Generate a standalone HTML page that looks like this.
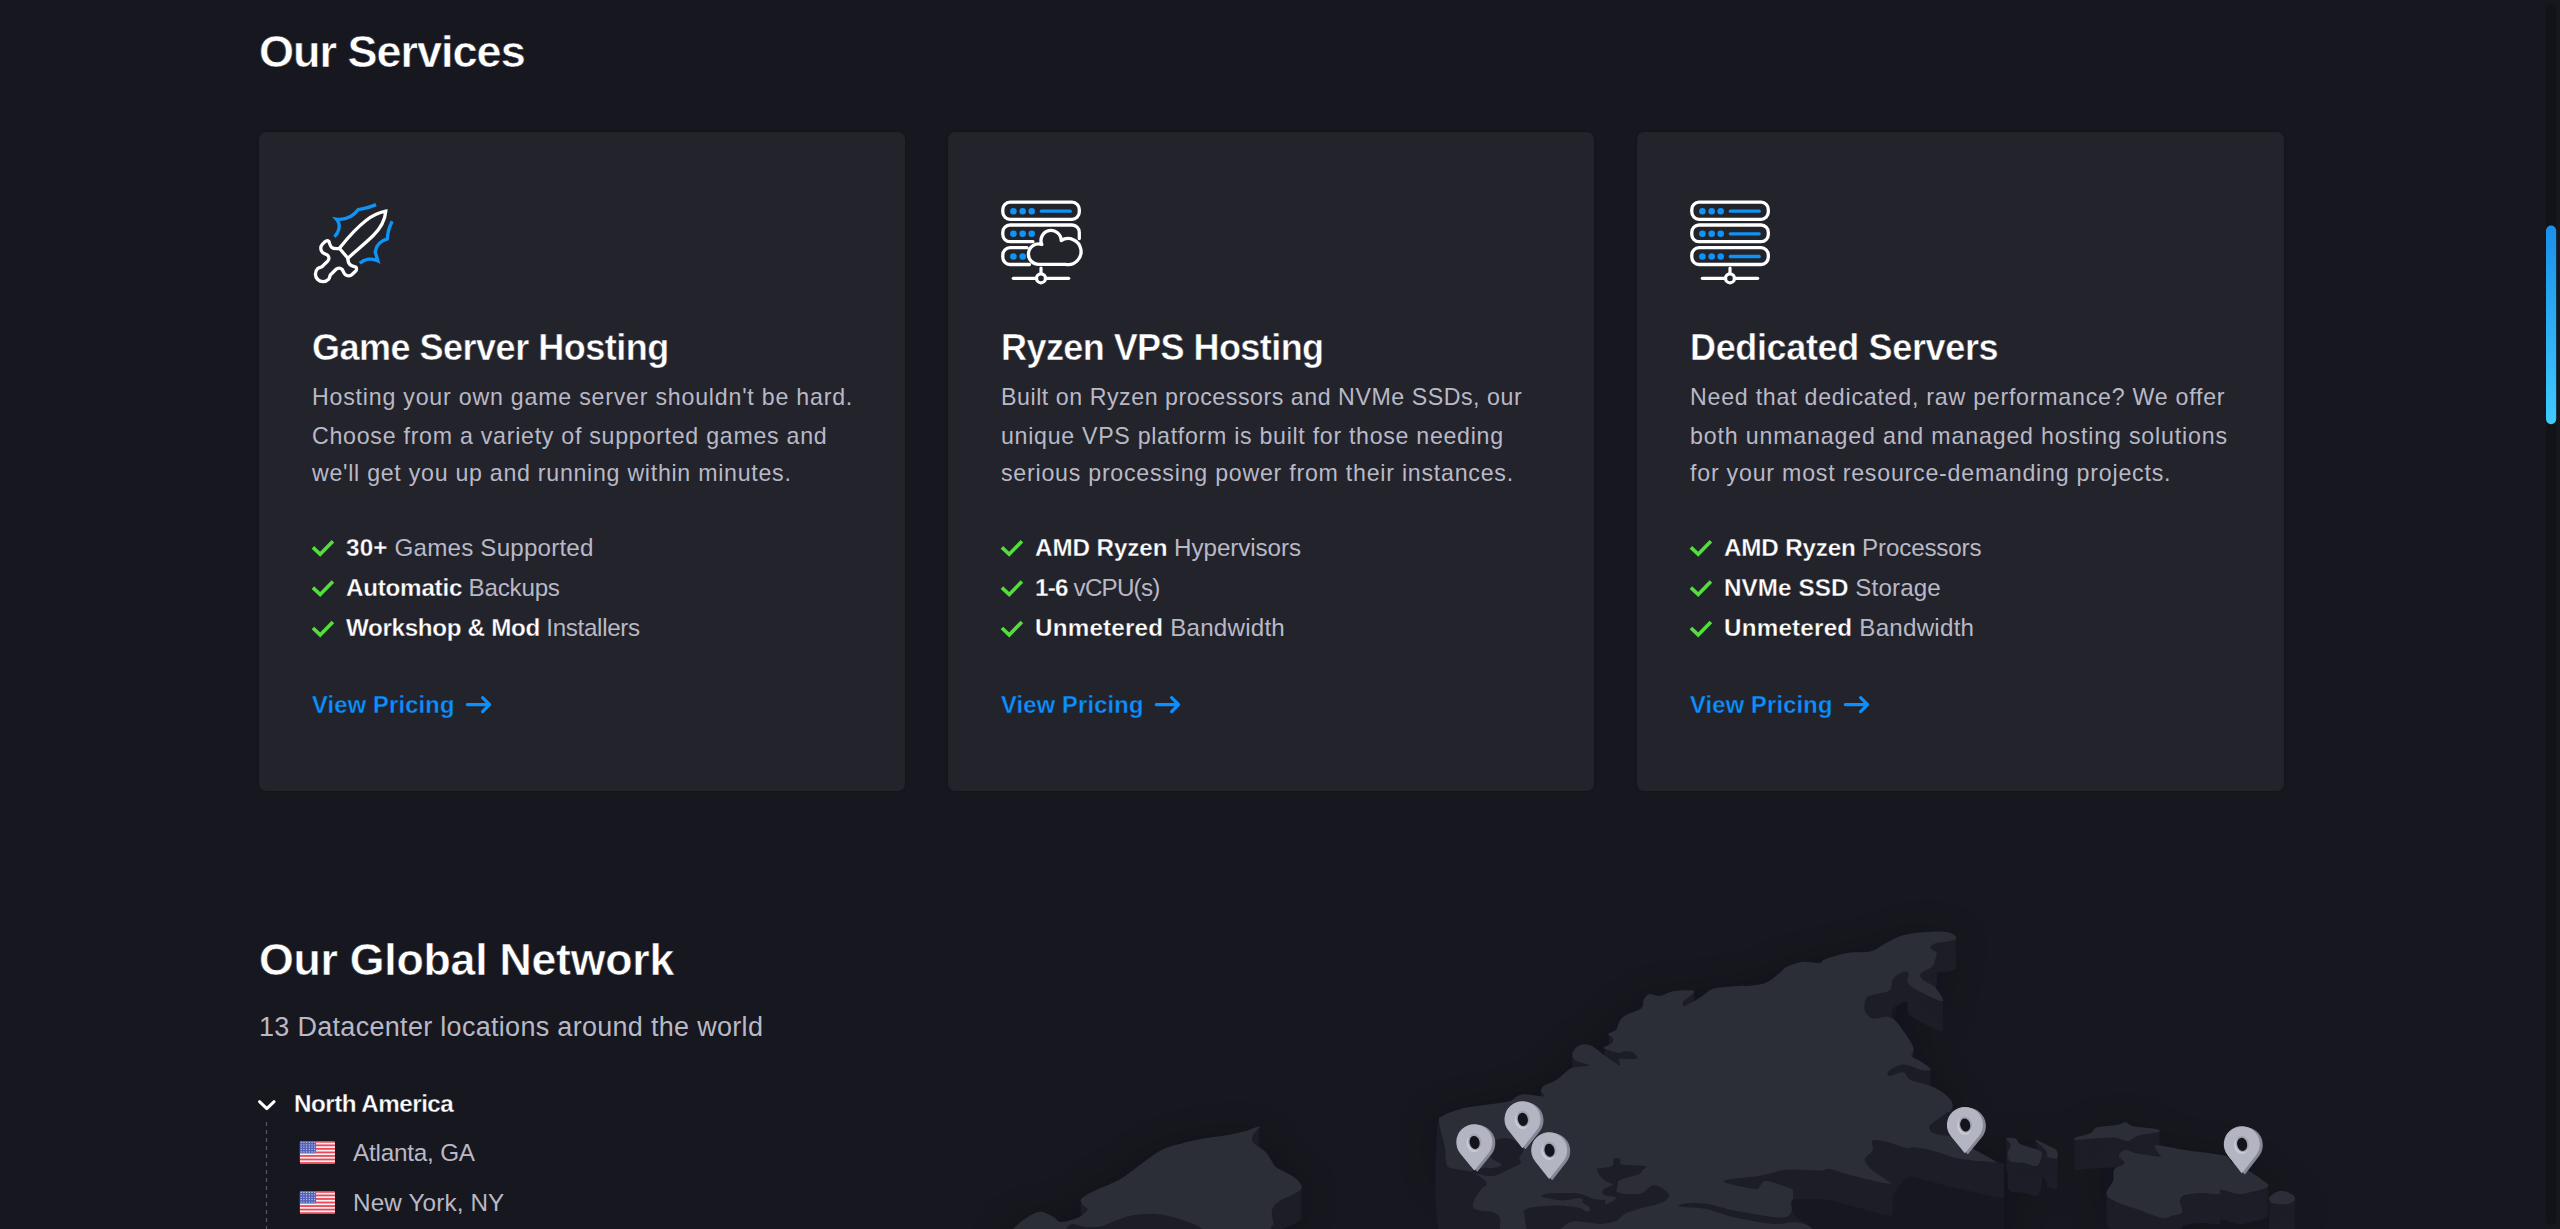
<!DOCTYPE html>
<html><head><meta charset="utf-8">
<style>
*{margin:0;padding:0;box-sizing:border-box}
html,body{width:2560px;height:1229px;overflow:hidden;background:#17171f;font-family:"Liberation Sans",sans-serif}
.a{position:absolute;white-space:nowrap;line-height:1}
.a b{color:#fff;font-weight:bold;-webkit-text-stroke:0.3px #23232c}
.card{position:absolute;top:132px;height:659px;background:#23232c;border-radius:7px;box-shadow:0 0 3px rgba(8,8,12,.3)}
svg{position:absolute;left:0;top:0}
</style></head>
<body>
<svg width="2560" height="1229" viewBox="0 0 2560 1229" style="position:absolute;left:0;top:0">
<defs>
<path id="f0" d="M1259.4,1126.6 C1257.9,1126.1 1249.5,1130.1 1243.8,1131.6 C1238.1,1133.1 1231.8,1134.3 1225.0,1135.5 C1218.2,1136.7 1210.6,1137.2 1203.1,1138.6 C1195.5,1140.0 1186.7,1142.0 1179.7,1144.0 C1172.7,1146.0 1167.4,1146.9 1160.9,1150.3 C1154.4,1153.7 1147.6,1159.5 1140.6,1164.4 C1133.6,1169.4 1126.6,1175.6 1118.8,1180.0 C1111.0,1184.4 1100.0,1187.8 1093.8,1190.9 C1087.5,1194.0 1083.1,1196.5 1081.3,1198.8 C1079.5,1201.1 1081.8,1203.2 1082.8,1205.0 C1083.8,1206.8 1088.2,1207.7 1087.5,1209.7 C1086.8,1211.7 1083.1,1215.2 1078.8,1217.2 C1074.5,1219.2 1065.8,1221.9 1061.6,1221.9 C1057.4,1221.9 1057.2,1218.9 1053.8,1217.2 C1050.4,1215.5 1045.2,1212.0 1041.3,1211.7 C1037.4,1211.4 1035.0,1212.7 1030.3,1215.6 C1025.6,1218.5 1017.2,1224.1 1013.0,1229.0 C1008.8,1233.9 1005.0,1245.0 1005.0,1245.0 C1005.0,1245.0 1290.0,1245.0 1290.0,1245.0 C1290.0,1245.0 1274.7,1232.5 1271.9,1229.0 C1269.1,1225.5 1273.4,1226.8 1273.4,1223.8 C1273.4,1220.8 1271.1,1214.9 1271.9,1211.3 C1272.7,1207.7 1273.9,1205.0 1278.1,1201.9 C1282.3,1198.8 1293.0,1195.1 1296.9,1192.5 C1300.8,1189.9 1302.1,1188.9 1301.6,1186.3 C1301.1,1183.7 1298.0,1180.0 1293.8,1176.9 C1289.6,1173.8 1280.2,1170.1 1276.6,1167.5 C1272.9,1164.9 1273.7,1163.9 1271.9,1161.3 C1270.1,1158.7 1268.7,1155.0 1265.6,1151.9 C1262.5,1148.8 1255.2,1145.4 1253.1,1142.5 C1251.0,1139.6 1252.0,1137.4 1253.1,1134.7 C1254.1,1132.0 1261.0,1127.1 1259.4,1126.6 Z"/>
<path id="f1" d="M1439.0,1122.8 C1438.6,1117.7 1438.2,1118.5 1442.4,1116.0 C1446.6,1113.5 1456.6,1110.0 1464.0,1108.1 C1471.4,1106.2 1479.1,1105.8 1486.6,1104.7 C1494.1,1103.6 1503.3,1103.0 1509.2,1101.3 C1515.1,1099.6 1516.0,1095.2 1521.7,1094.4 C1527.5,1093.6 1540.5,1096.9 1543.7,1096.4 C1546.9,1095.9 1541.0,1093.3 1541.0,1091.6 C1541.0,1089.9 1541.0,1088.2 1543.7,1086.1 C1546.5,1084.0 1552.9,1082.2 1557.5,1079.2 C1562.1,1076.2 1565.9,1070.5 1571.2,1068.2 C1576.5,1065.9 1588.4,1066.8 1589.1,1065.5 C1589.8,1064.2 1578.4,1062.7 1575.6,1060.6 C1572.8,1058.5 1571.7,1055.4 1572.5,1052.8 C1573.3,1050.2 1577.2,1046.2 1580.3,1045.0 C1583.4,1043.8 1587.1,1044.0 1591.3,1045.8 C1595.5,1047.6 1600.6,1052.8 1605.3,1056.0 C1610.0,1059.2 1617.1,1064.8 1619.4,1065.3 C1621.8,1065.8 1617.8,1060.0 1619.4,1059.0 C1621.0,1058.0 1625.8,1059.1 1628.8,1059.0 C1631.8,1058.9 1636.5,1059.3 1637.3,1058.3 C1638.1,1057.3 1635.4,1054.0 1633.4,1052.8 C1631.5,1051.6 1628.2,1051.3 1625.6,1051.3 C1623.0,1051.3 1621.4,1053.3 1617.8,1052.8 C1614.2,1052.3 1604.8,1049.7 1603.8,1048.1 C1602.8,1046.5 1610.0,1045.0 1611.6,1043.4 C1613.1,1041.9 1613.6,1040.4 1613.1,1038.8 C1612.6,1037.2 1607.9,1035.6 1608.4,1034.0 C1608.9,1032.4 1614.5,1031.5 1616.3,1029.4 C1618.1,1027.3 1617.9,1024.0 1619.4,1021.6 C1621.0,1019.2 1621.9,1017.5 1625.6,1015.3 C1629.2,1013.1 1638.3,1010.9 1641.3,1008.3 C1644.3,1005.7 1642.3,1002.1 1643.6,999.7 C1644.9,997.4 1646.3,994.9 1649.0,994.2 C1651.7,993.6 1655.8,996.3 1660.0,995.8 C1664.2,995.3 1668.8,992.0 1674.0,991.1 C1679.2,990.2 1688.0,990.0 1691.3,990.3 C1694.6,990.6 1694.9,990.9 1693.6,992.7 C1692.3,994.5 1685.1,999.1 1683.4,1001.3 C1681.7,1003.5 1682.6,1005.5 1683.4,1006.0 C1684.2,1006.5 1685.1,1005.9 1688.0,1004.4 C1690.9,1002.9 1696.4,999.9 1700.6,997.3 C1704.8,994.7 1707.8,990.6 1713.0,988.8 C1718.2,987.0 1725.4,986.9 1731.9,986.4 C1738.4,985.9 1746.2,986.4 1752.2,985.6 C1758.2,984.8 1763.1,983.9 1767.8,981.7 C1772.5,979.5 1777.2,974.8 1780.3,972.3 C1783.4,969.8 1782.9,968.6 1786.6,966.9 C1790.2,965.2 1796.7,962.5 1802.2,961.9 C1807.7,961.2 1815.5,963.5 1819.4,963.0 C1823.3,962.5 1820.7,960.7 1825.6,959.0 C1830.5,957.3 1841.5,954.1 1849.0,952.8 C1856.5,951.5 1864.4,953.1 1870.9,951.3 C1877.4,949.5 1881.8,944.8 1888.0,941.9 C1894.2,939.0 1899.0,935.7 1908.4,934.0 C1917.8,932.3 1936.5,931.2 1944.4,931.7 C1952.4,932.2 1955.1,935.6 1956.1,937.2 C1957.1,938.8 1954.1,940.1 1950.6,941.1 C1947.1,942.1 1938.4,942.2 1935.0,943.4 C1931.6,944.6 1930.0,946.5 1930.3,948.1 C1930.6,949.7 1935.8,950.7 1936.6,952.8 C1937.4,954.9 1935.8,958.2 1935.0,960.6 C1934.2,963.0 1934.2,964.8 1931.9,966.9 C1929.6,969.0 1922.6,971.0 1921.0,973.1 C1919.4,975.2 1920.2,977.0 1922.5,979.4 C1924.8,981.8 1931.8,983.6 1935.0,987.2 C1938.2,990.9 1946.2,1001.6 1942.0,1001.3 C1937.8,1001.0 1915.6,990.3 1910.0,985.6 C1904.4,980.9 1909.7,975.3 1908.4,973.1 C1907.1,970.9 1904.8,971.2 1902.2,972.3 C1899.6,973.3 1894.9,976.4 1892.8,979.4 C1890.7,982.4 1893.1,987.7 1889.7,990.3 C1886.3,992.9 1876.4,993.7 1872.5,995.0 C1868.6,996.3 1867.6,995.5 1866.3,998.1 C1865.0,1000.7 1863.7,1007.2 1864.7,1010.6 C1865.7,1014.0 1868.6,1017.4 1872.5,1018.4 C1876.4,1019.4 1883.8,1016.1 1888.0,1016.9 C1892.2,1017.7 1893.3,1018.2 1897.5,1023.1 C1901.7,1028.0 1910.7,1041.1 1913.0,1046.6 C1915.3,1052.1 1910.5,1053.6 1911.6,1055.9 C1912.7,1058.2 1916.2,1058.4 1919.4,1060.6 C1922.6,1062.8 1930.4,1067.6 1930.7,1069.2 C1931.0,1070.8 1926.1,1070.8 1921.5,1070.0 C1916.9,1069.2 1908.5,1064.5 1903.1,1064.6 C1897.7,1064.7 1891.5,1068.8 1889.2,1070.7 C1886.9,1072.6 1886.9,1075.8 1889.2,1076.1 C1891.5,1076.4 1899.5,1071.6 1903.1,1072.3 C1906.7,1073.0 1906.1,1077.7 1910.7,1080.0 C1915.3,1082.3 1925.1,1083.8 1930.7,1086.1 C1936.3,1088.4 1941.0,1091.0 1944.6,1093.8 C1948.2,1096.6 1951.3,1100.2 1952.3,1103.0 C1953.3,1105.8 1952.5,1107.9 1950.7,1110.7 C1948.9,1113.5 1944.8,1117.3 1941.5,1119.9 C1938.2,1122.5 1932.2,1124.0 1930.7,1126.1 C1929.2,1128.1 1929.5,1130.7 1932.3,1132.2 C1935.1,1133.7 1942.0,1133.2 1947.6,1135.3 C1953.2,1137.4 1959.8,1141.7 1966.0,1145.0 C1972.2,1148.3 1979.5,1152.2 1984.5,1155.0 C1989.5,1157.8 1993.8,1159.8 1996.0,1162.0 C1998.2,1164.2 1997.7,1154.2 1998.0,1168.0 C1998.3,1181.8 1998.0,1245.0 1998.0,1245.0 C1998.0,1245.0 1497.9,1245.0 1497.9,1245.0 C1497.9,1245.0 1500.9,1225.6 1500.1,1220.1 C1499.3,1214.6 1496.3,1213.7 1493.3,1212.2 C1490.3,1210.7 1485.4,1211.8 1482.0,1211.0 C1478.6,1210.2 1474.1,1209.7 1473.0,1207.6 C1471.9,1205.5 1473.9,1201.6 1475.2,1198.6 C1476.5,1195.6 1479.0,1192.1 1480.9,1189.5 C1482.8,1186.9 1487.9,1185.6 1486.6,1182.8 C1485.3,1180.0 1477.9,1174.9 1473.0,1172.6 C1468.1,1170.3 1461.2,1170.2 1457.1,1169.2 C1452.9,1168.2 1450.0,1168.4 1448.1,1166.9 C1446.2,1165.4 1446.4,1163.5 1445.8,1160.1 C1445.2,1156.7 1445.8,1152.8 1444.7,1146.6 C1443.6,1140.4 1439.4,1127.9 1439.0,1122.8 Z"/>
<path id="f2" d="M2006.0,1138.4 C2006.8,1137.4 2012.7,1137.4 2015.3,1138.4 C2017.9,1139.4 2017.3,1142.5 2021.4,1144.5 C2025.5,1146.5 2036.6,1148.7 2039.9,1150.7 C2043.2,1152.8 2041.9,1154.2 2041.4,1156.8 C2040.9,1159.4 2039.6,1165.1 2036.8,1166.1 C2034.0,1167.1 2028.8,1163.8 2024.5,1163.0 C2020.2,1162.2 2013.5,1162.9 2010.7,1161.4 C2007.9,1159.9 2007.6,1156.6 2007.6,1153.8 C2007.6,1151.0 2011.0,1147.1 2010.7,1144.5 C2010.4,1141.9 2005.2,1139.4 2006.0,1138.4 Z"/>
<path id="f3" d="M2035.3,1139.9 C2035.8,1139.1 2045.5,1144.3 2049.1,1146.1 C2052.7,1147.9 2055.5,1148.7 2056.8,1150.7 C2058.1,1152.8 2058.3,1157.4 2056.8,1158.4 C2055.3,1159.4 2049.4,1158.1 2047.6,1156.8 C2045.8,1155.5 2048.1,1153.5 2046.0,1150.7 C2044.0,1147.9 2034.8,1140.7 2035.3,1139.9 Z"/>
<path id="f4" d="M2075.8,1137.5 C2078.2,1136.4 2086.9,1134.7 2090.5,1133.0 C2094.1,1131.3 2093.0,1128.6 2097.3,1127.3 C2101.7,1126.0 2111.9,1125.9 2116.6,1125.1 C2121.3,1124.2 2122.8,1122.0 2125.6,1122.2 C2128.4,1122.4 2128.4,1125.1 2133.5,1126.2 C2138.6,1127.3 2152.0,1128.0 2156.2,1129.0 C2160.3,1130.0 2161.2,1130.9 2158.4,1131.9 C2155.6,1132.9 2144.3,1133.7 2139.2,1135.2 C2134.1,1136.7 2132.1,1140.5 2127.9,1140.9 C2123.8,1141.3 2120.0,1137.9 2114.3,1137.5 C2108.7,1137.1 2100.4,1138.2 2094.0,1138.6 C2087.6,1139.0 2078.8,1140.0 2075.8,1139.8 C2072.8,1139.6 2073.4,1138.6 2075.8,1137.5 Z"/>
<path id="f5" d="M2155.0,1145.4 C2157.3,1144.3 2168.2,1146.9 2173.1,1147.7 C2178.0,1148.5 2175.9,1148.7 2184.4,1150.0 C2192.9,1151.3 2216.1,1153.5 2224.0,1155.6 C2231.9,1157.7 2228.2,1160.1 2232.0,1162.4 C2235.8,1164.7 2241.0,1165.8 2246.7,1169.2 C2252.3,1172.6 2262.5,1179.8 2265.9,1182.8 C2269.3,1185.8 2269.3,1185.8 2267.0,1187.3 C2264.7,1188.8 2257.0,1190.7 2252.3,1191.8 C2247.6,1192.9 2244.0,1194.5 2238.7,1194.1 C2233.4,1193.7 2223.8,1189.5 2220.6,1189.5 C2217.4,1189.5 2222.7,1193.5 2219.5,1194.1 C2216.3,1194.7 2207.2,1192.7 2201.4,1192.9 C2195.6,1193.1 2188.0,1193.9 2184.4,1195.2 C2180.8,1196.5 2180.3,1198.1 2179.9,1200.9 C2179.5,1203.7 2183.3,1209.8 2182.2,1212.2 C2181.1,1214.7 2176.5,1214.7 2173.1,1215.6 C2169.7,1216.5 2167.5,1218.8 2161.8,1217.8 C2156.2,1216.8 2146.7,1212.5 2139.2,1209.9 C2131.7,1207.3 2122.1,1204.6 2116.6,1202.0 C2111.1,1199.4 2107.0,1197.7 2106.4,1194.1 C2105.8,1190.5 2111.9,1184.7 2113.2,1180.5 C2114.5,1176.3 2112.4,1172.0 2114.3,1169.2 C2116.2,1166.4 2123.8,1165.8 2124.5,1163.5 C2125.2,1161.2 2118.6,1157.8 2118.8,1155.6 C2119.0,1153.3 2122.6,1150.4 2125.6,1150.0 C2128.6,1149.6 2131.2,1152.2 2136.9,1153.3 C2142.6,1154.4 2155.7,1156.5 2159.5,1156.7 C2163.3,1156.9 2160.2,1156.4 2159.5,1154.5 C2158.8,1152.6 2152.7,1146.5 2155.0,1145.4 Z"/>
<path id="f6" d="M2269.3,1197.5 C2270.6,1195.4 2276.7,1191.1 2280.6,1190.7 C2284.5,1190.3 2290.7,1193.5 2293.0,1195.2 C2295.3,1196.9 2295.5,1199.4 2294.2,1200.9 C2292.9,1202.4 2288.7,1203.9 2285.1,1204.3 C2281.5,1204.7 2275.3,1204.2 2272.7,1203.1 C2270.1,1202.0 2268.0,1199.6 2269.3,1197.5 Z"/>
<filter id="msh" x="-20%" y="-50%" width="140%" height="200%"><feGaussianBlur stdDeviation="22"/></filter>
</defs>
<g filter="url(#msh)" fill="#0c0c12" opacity="0.4">
<use href="#f0" y="12"/>
<use href="#f1" y="12"/>
<use href="#f2" y="12"/>
<use href="#f3" y="12"/>
<use href="#f4" y="12"/>
<use href="#f5" y="12"/>
<use href="#f6" y="12"/>
</g>
<g fill="#1c1d26">
<use href="#f0" y="2"/>
<use href="#f1" y="2"/>
<use href="#f2" y="2"/>
<use href="#f3" y="2"/>
<use href="#f4" y="2"/>
<use href="#f5" y="2"/>
<use href="#f6" y="2"/>
<use href="#f0" y="4"/>
<use href="#f1" y="4"/>
<use href="#f2" y="4"/>
<use href="#f3" y="4"/>
<use href="#f4" y="4"/>
<use href="#f5" y="4"/>
<use href="#f6" y="4"/>
<use href="#f0" y="6"/>
<use href="#f1" y="6"/>
<use href="#f2" y="6"/>
<use href="#f3" y="6"/>
<use href="#f4" y="6"/>
<use href="#f5" y="6"/>
<use href="#f6" y="6"/>
<use href="#f0" y="8"/>
<use href="#f1" y="8"/>
<use href="#f2" y="8"/>
<use href="#f3" y="8"/>
<use href="#f4" y="8"/>
<use href="#f5" y="8"/>
<use href="#f6" y="8"/>
<use href="#f0" y="10"/>
<use href="#f1" y="10"/>
<use href="#f2" y="10"/>
<use href="#f3" y="10"/>
<use href="#f4" y="10"/>
<use href="#f5" y="10"/>
<use href="#f6" y="10"/>
<use href="#f0" y="12"/>
<use href="#f1" y="12"/>
<use href="#f2" y="12"/>
<use href="#f3" y="12"/>
<use href="#f4" y="12"/>
<use href="#f5" y="12"/>
<use href="#f6" y="12"/>
<use href="#f0" y="14"/>
<use href="#f1" y="14"/>
<use href="#f2" y="14"/>
<use href="#f3" y="14"/>
<use href="#f4" y="14"/>
<use href="#f5" y="14"/>
<use href="#f6" y="14"/>
<use href="#f0" y="16"/>
<use href="#f1" y="16"/>
<use href="#f2" y="16"/>
<use href="#f3" y="16"/>
<use href="#f4" y="16"/>
<use href="#f5" y="16"/>
<use href="#f6" y="16"/>
<use href="#f0" y="18"/>
<use href="#f1" y="18"/>
<use href="#f2" y="18"/>
<use href="#f3" y="18"/>
<use href="#f4" y="18"/>
<use href="#f5" y="18"/>
<use href="#f6" y="18"/>
<use href="#f0" y="20"/>
<use href="#f1" y="20"/>
<use href="#f2" y="20"/>
<use href="#f3" y="20"/>
<use href="#f4" y="20"/>
<use href="#f5" y="20"/>
<use href="#f6" y="20"/>
<use href="#f0" y="22"/>
<use href="#f1" y="22"/>
<use href="#f2" y="22"/>
<use href="#f3" y="22"/>
<use href="#f4" y="22"/>
<use href="#f5" y="22"/>
<use href="#f6" y="22"/>
<use href="#f0" y="24"/>
<use href="#f1" y="24"/>
<use href="#f2" y="24"/>
<use href="#f3" y="24"/>
<use href="#f4" y="24"/>
<use href="#f5" y="24"/>
<use href="#f6" y="24"/>
<use href="#f0" y="26"/>
<use href="#f1" y="26"/>
<use href="#f2" y="26"/>
<use href="#f3" y="26"/>
<use href="#f4" y="26"/>
<use href="#f5" y="26"/>
<use href="#f6" y="26"/>
<use href="#f0" y="28"/>
<use href="#f1" y="28"/>
<use href="#f2" y="28"/>
<use href="#f3" y="28"/>
<use href="#f4" y="28"/>
<use href="#f5" y="28"/>
<use href="#f6" y="28"/>
<use href="#f0" y="30"/>
<use href="#f1" y="30"/>
<use href="#f2" y="30"/>
<use href="#f3" y="30"/>
<use href="#f4" y="30"/>
<use href="#f5" y="30"/>
<use href="#f6" y="30"/>
<path d="M1439.0,1122.8 C1437.4,1121.1 1437.1,1131.3 1436.5,1140.0 C1435.9,1148.7 1435.6,1163.3 1435.5,1175.0 C1435.4,1186.7 1435.2,1198.3 1436.0,1210.0 C1436.8,1221.7 1440.0,1245.0 1440.0,1245.0 C1440.0,1245.0 1500.0,1245.0 1500.0,1245.0 C1500.0,1245.0 1500.0,1165.0 1500.0,1165.0 C1500.0,1165.0 1456.2,1157.0 1446.0,1150.0 C1435.8,1143.0 1440.6,1124.5 1439.0,1122.8 Z"/>
</g>
<g fill="#2c2e37">
<use href="#f0"/>
<use href="#f1"/>
<use href="#f2"/>
<use href="#f3"/>
<use href="#f4"/>
<use href="#f5"/>
<use href="#f6"/>
</g>
<g fill="#1c1d26">
<path d="M1069.4,1225.0 C1073.6,1222.0 1079.8,1226.7 1085.0,1227.0 C1090.2,1227.3 1095.6,1227.6 1100.6,1226.6 C1105.6,1225.6 1109.8,1222.8 1115.0,1221.0 C1120.2,1219.2 1125.2,1216.8 1131.9,1215.6 C1138.6,1214.4 1147.5,1213.5 1155.3,1214.0 C1163.1,1214.5 1171.0,1216.3 1178.8,1218.8 C1186.6,1221.3 1197.0,1224.6 1202.2,1229.0 C1207.4,1233.4 1210.0,1245.0 1210.0,1245.0 C1210.0,1245.0 1060.0,1245.0 1060.0,1245.0 C1060.0,1245.0 1065.2,1228.0 1069.4,1225.0 Z"/>
<path d="M1490.0,1142.0 C1493.5,1140.1 1503.7,1137.5 1509.2,1138.6 C1514.7,1139.7 1521.1,1145.6 1522.8,1148.8 C1524.5,1152.0 1519.8,1155.5 1519.4,1157.9 C1519.0,1160.4 1522.2,1161.6 1520.5,1163.5 C1518.8,1165.4 1513.7,1167.1 1509.2,1169.2 C1504.7,1171.3 1498.6,1175.2 1493.3,1176.0 C1488.0,1176.8 1481.2,1174.5 1477.5,1173.7 C1473.8,1173.0 1470.0,1172.5 1471.0,1171.5 C1472.0,1170.5 1479.5,1168.6 1483.2,1168.0 C1486.9,1167.4 1490.3,1168.5 1493.3,1168.0 C1496.3,1167.5 1501.7,1166.4 1501.3,1164.7 C1500.9,1163.0 1493.3,1160.4 1491.1,1157.9 C1488.9,1155.5 1488.2,1152.7 1488.0,1150.0 C1487.8,1147.3 1486.5,1143.9 1490.0,1142.0 Z"/>
<path d="M1542.2,1195.8 C1543.0,1195.2 1543.7,1193.9 1548.4,1193.4 C1553.1,1192.9 1564.8,1192.9 1570.3,1193.0 C1575.8,1193.1 1577.4,1193.2 1581.3,1194.2 C1585.2,1195.2 1589.9,1197.9 1593.8,1198.9 C1597.7,1199.9 1602.8,1199.2 1604.7,1200.1 C1606.7,1201.0 1603.8,1204.5 1605.5,1204.4 C1607.2,1204.3 1613.1,1200.9 1614.8,1199.7 C1616.5,1198.5 1617.4,1198.1 1615.6,1197.3 C1613.8,1196.5 1606.1,1195.9 1603.9,1195.0 C1601.7,1194.1 1602.2,1192.9 1602.3,1191.9 C1602.4,1190.9 1603.1,1189.8 1604.7,1188.8 C1606.3,1187.8 1610.4,1186.4 1611.7,1185.6 C1613.0,1184.8 1613.3,1184.8 1612.5,1184.1 C1611.7,1183.4 1609.0,1182.9 1607.0,1181.7 C1605.0,1180.5 1602.3,1178.7 1600.8,1177.0 C1599.2,1175.3 1598.1,1173.0 1597.7,1171.6 C1597.3,1170.2 1596.1,1169.5 1598.5,1168.6 C1600.9,1167.6 1609.7,1167.5 1612.2,1165.9 C1614.7,1164.3 1612.2,1160.2 1613.6,1159.0 C1615.0,1157.8 1619.1,1158.1 1620.5,1159.0 C1621.9,1159.9 1617.8,1163.3 1621.9,1164.5 C1626.0,1165.7 1641.8,1165.0 1645.2,1165.9 C1648.6,1166.8 1643.5,1168.7 1642.5,1170.0 C1641.5,1171.3 1642.9,1172.2 1639.1,1173.9 C1635.3,1175.6 1623.0,1178.2 1619.5,1180.2 C1616.0,1182.2 1618.5,1183.8 1618.0,1185.6 C1617.5,1187.4 1615.8,1189.8 1616.4,1191.1 C1617.1,1192.4 1619.2,1192.9 1621.9,1193.4 C1624.6,1193.9 1629.3,1194.3 1632.8,1194.2 C1636.3,1194.1 1639.8,1194.1 1643.0,1192.7 C1646.2,1191.3 1649.4,1186.5 1652.3,1185.6 C1655.2,1184.7 1657.5,1185.8 1660.2,1187.2 C1663.0,1188.6 1667.9,1192.0 1668.8,1194.2 C1669.7,1196.4 1667.7,1198.8 1665.6,1200.5 C1663.5,1202.2 1660.5,1203.1 1656.3,1204.4 C1652.1,1205.7 1645.8,1206.7 1640.6,1208.3 C1635.4,1209.9 1628.6,1212.0 1625.0,1213.8 C1621.4,1215.6 1620.5,1217.9 1618.8,1219.2 C1617.1,1220.5 1617.7,1220.8 1614.8,1221.6 C1611.9,1222.4 1606.4,1223.8 1601.6,1223.9 C1596.8,1224.0 1591.1,1222.6 1585.9,1222.3 C1580.7,1222.0 1576.2,1220.2 1570.3,1222.3 C1564.4,1224.4 1557.6,1232.9 1550.8,1235.0 C1544.0,1237.1 1534.1,1238.5 1529.7,1235.0 C1525.3,1231.5 1525.1,1217.9 1524.2,1213.8 C1523.3,1209.7 1523.0,1211.6 1524.2,1210.6 C1525.4,1209.5 1526.2,1208.3 1531.3,1207.5 C1536.4,1206.7 1546.9,1205.5 1554.7,1205.5 C1562.5,1205.5 1572.9,1206.5 1578.1,1207.5 C1583.3,1208.5 1584.0,1210.9 1585.9,1211.4 C1587.9,1211.9 1589.3,1211.4 1589.8,1210.6 C1590.3,1209.8 1590.3,1208.0 1589.1,1206.7 C1587.9,1205.4 1583.8,1204.0 1582.8,1202.8 C1581.8,1201.6 1583.6,1200.5 1582.8,1199.7 C1582.0,1198.9 1581.5,1198.0 1578.1,1198.1 C1574.7,1198.2 1568.2,1200.6 1562.5,1200.5 C1556.8,1200.4 1547.2,1198.1 1543.8,1197.3 C1540.4,1196.5 1541.4,1196.4 1542.2,1195.8 Z"/>
<path d="M1872.6,1140.6 C1875.0,1139.2 1881.7,1140.7 1887.2,1141.9 C1892.7,1143.1 1901.4,1147.0 1905.8,1147.9 C1910.2,1148.8 1909.3,1146.8 1913.7,1147.2 C1918.1,1147.6 1924.8,1148.6 1932.3,1150.5 C1939.8,1152.4 1948.3,1156.5 1958.9,1158.5 C1969.5,1160.5 1988.5,1161.6 1996.0,1162.5 C2003.5,1163.4 2004.0,1164.0 2004.0,1164.0 C2004.0,1164.0 2004.0,1245.0 2004.0,1245.0 C2004.0,1245.0 1812.8,1245.0 1812.8,1245.0 C1812.8,1245.0 1815.8,1232.8 1812.8,1229.0 C1809.8,1225.2 1801.6,1222.8 1795.0,1222.0 C1788.4,1221.2 1783.3,1224.8 1773.0,1224.0 C1762.7,1223.2 1744.2,1219.5 1733.1,1217.0 C1722.0,1214.5 1715.4,1210.8 1706.6,1209.0 C1697.8,1207.2 1683.6,1207.4 1680.0,1206.5 C1676.4,1205.6 1680.6,1204.0 1685.0,1203.5 C1689.4,1203.0 1698.6,1202.6 1706.6,1203.7 C1714.6,1204.8 1722.0,1208.1 1733.1,1210.3 C1744.2,1212.5 1763.7,1216.0 1773.0,1216.9 C1782.3,1217.8 1785.6,1218.0 1788.9,1215.6 C1792.2,1213.2 1792.2,1206.3 1792.9,1202.3 C1793.6,1198.3 1793.1,1193.9 1792.9,1191.7 C1792.7,1189.5 1796.0,1190.8 1791.6,1189.0 C1787.2,1187.2 1771.6,1181.5 1766.3,1181.1 C1761.0,1180.7 1761.7,1185.1 1759.7,1186.4 C1757.7,1187.7 1760.4,1189.9 1754.4,1189.0 C1748.4,1188.1 1722.9,1183.3 1723.8,1181.1 C1724.7,1178.9 1749.3,1177.7 1759.7,1175.8 C1770.1,1173.9 1776.2,1170.7 1786.2,1169.8 C1796.2,1168.9 1812.1,1170.6 1819.4,1170.5 C1826.7,1170.4 1824.5,1168.2 1830.0,1169.1 C1835.5,1170.0 1842.8,1173.3 1852.6,1175.8 C1862.4,1178.2 1883.6,1183.3 1889.0,1183.8 C1894.4,1184.3 1887.7,1181.2 1885.0,1179.0 C1882.3,1176.8 1876.0,1173.7 1872.6,1170.5 C1869.2,1167.3 1864.6,1163.1 1864.6,1159.8 C1864.6,1156.5 1871.3,1153.7 1872.6,1150.5 C1873.9,1147.3 1870.2,1142.0 1872.6,1140.6 Z"/>
<path d="M1930.8,1124.6 C1932.7,1122.6 1937.8,1119.1 1941.0,1117.0 C1944.2,1114.9 1948.0,1110.9 1949.8,1112.2 C1951.6,1113.5 1952.2,1121.2 1952.0,1125.0 C1951.8,1128.8 1951.2,1133.5 1948.4,1134.9 C1945.6,1136.3 1938.4,1134.4 1935.2,1133.4 C1932.0,1132.4 1930.2,1130.5 1929.5,1129.0 C1928.8,1127.5 1928.9,1126.6 1930.8,1124.6 Z"/>
</g>
<path fill="#17171f" d="M1792.9,1213.0 C1792.2,1211.0 1789.6,1201.0 1792.9,1199.7 C1796.2,1198.4 1820.0,1199.0 1826.0,1199.7 C1832.0,1200.4 1846.1,1204.7 1852.6,1206.3 C1859.1,1207.9 1887.2,1216.7 1891.2,1215.6 C1895.2,1214.5 1891.5,1198.7 1893.0,1195.0 C1894.5,1191.3 1903.7,1180.2 1905.8,1178.4 C1907.9,1176.6 1909.8,1176.4 1913.7,1177.1 C1917.6,1177.8 1936.8,1183.4 1945.0,1185.4 C1953.2,1187.4 1990.1,1195.8 1996.0,1197.0 C2001.9,1198.2 2004.0,1197.0 2004.0,1197.0 C2004.0,1197.0 2004.0,1245.0 2004.0,1245.0 C2004.0,1245.0 1812.8,1245.0 1812.8,1245.0 C1812.8,1245.0 1814.1,1231.5 1812.8,1229.0 C1811.5,1226.5 1802.0,1221.6 1800.0,1220.0 C1798.0,1218.4 1793.6,1215.0 1792.9,1213.0 Z"/>
<path d="M1474.3,1169.7 L1460.9,1153.3 A17.4,17.4 0 1 1 1487.7,1153.3 Z" transform="translate(2.9,1.0)" fill="#878896" stroke="#878896" stroke-width="1.4" stroke-linejoin="round"/><path d="M1474.3,1169.7 L1460.9,1153.3 A17.4,17.4 0 1 1 1487.7,1153.3 Z" fill="#b4b5c3" stroke="#b4b5c3" stroke-width="1.2" stroke-linejoin="round"/><ellipse cx="1473.5" cy="1143.5" rx="7.2" ry="8.6" fill="#c9cad5" transform="rotate(-12 1474.3 1142.3)"/><ellipse cx="1474.9" cy="1142.1" rx="6.6" ry="8.2" fill="#a2a3b0" transform="rotate(-12 1474.3 1142.3)"/><ellipse cx="1474.6" cy="1142.5" rx="5.0" ry="6.6" fill="#14141c" transform="rotate(-12 1474.3 1142.3)"/>
<path d="M1522.5,1147.3 L1508.8,1130.0 A17.4,17.4 0 1 1 1536.2,1130.0 Z" transform="translate(2.9,1.0)" fill="#878896" stroke="#878896" stroke-width="1.4" stroke-linejoin="round"/><path d="M1522.5,1147.3 L1508.8,1130.0 A17.4,17.4 0 1 1 1536.2,1130.0 Z" fill="#b4b5c3" stroke="#b4b5c3" stroke-width="1.2" stroke-linejoin="round"/><ellipse cx="1521.7" cy="1120.4" rx="7.2" ry="8.6" fill="#c9cad5" transform="rotate(-12 1522.5 1119.2)"/><ellipse cx="1523.1" cy="1119.0" rx="6.6" ry="8.2" fill="#a2a3b0" transform="rotate(-12 1522.5 1119.2)"/><ellipse cx="1522.8" cy="1119.4" rx="5.0" ry="6.6" fill="#14141c" transform="rotate(-12 1522.5 1119.2)"/>
<path d="M1549.2,1178.2 L1535.5,1160.9 A17.4,17.4 0 1 1 1562.9,1160.9 Z" transform="translate(2.9,1.0)" fill="#878896" stroke="#878896" stroke-width="1.4" stroke-linejoin="round"/><path d="M1549.2,1178.2 L1535.5,1160.9 A17.4,17.4 0 1 1 1562.9,1160.9 Z" fill="#b4b5c3" stroke="#b4b5c3" stroke-width="1.2" stroke-linejoin="round"/><ellipse cx="1548.4" cy="1151.3" rx="7.2" ry="8.6" fill="#c9cad5" transform="rotate(-12 1549.2 1150.1)"/><ellipse cx="1549.8" cy="1149.9" rx="6.6" ry="8.2" fill="#a2a3b0" transform="rotate(-12 1549.2 1150.1)"/><ellipse cx="1549.5" cy="1150.3" rx="5.0" ry="6.6" fill="#14141c" transform="rotate(-12 1549.2 1150.1)"/>
<path d="M1964.9,1152.4 L1951.4,1135.9 A17.4,17.4 0 1 1 1978.4,1135.9 Z" transform="translate(2.9,1.0)" fill="#878896" stroke="#878896" stroke-width="1.4" stroke-linejoin="round"/><path d="M1964.9,1152.4 L1951.4,1135.9 A17.4,17.4 0 1 1 1978.4,1135.9 Z" fill="#b4b5c3" stroke="#b4b5c3" stroke-width="1.2" stroke-linejoin="round"/><ellipse cx="1964.1" cy="1126.1" rx="7.2" ry="8.6" fill="#c9cad5" transform="rotate(-12 1964.9 1124.9)"/><ellipse cx="1965.5" cy="1124.7" rx="6.6" ry="8.2" fill="#a2a3b0" transform="rotate(-12 1964.9 1124.9)"/><ellipse cx="1965.2" cy="1125.1" rx="5.0" ry="6.6" fill="#14141c" transform="rotate(-12 1964.9 1124.9)"/>
<path d="M2241.8,1172.5 L2228.1,1154.9 A17.4,17.4 0 1 1 2255.5,1154.9 Z" transform="translate(2.9,1.0)" fill="#878896" stroke="#878896" stroke-width="1.4" stroke-linejoin="round"/><path d="M2241.8,1172.5 L2228.1,1154.9 A17.4,17.4 0 1 1 2255.5,1154.9 Z" fill="#b4b5c3" stroke="#b4b5c3" stroke-width="1.2" stroke-linejoin="round"/><ellipse cx="2241.0" cy="1145.4" rx="7.2" ry="8.6" fill="#c9cad5" transform="rotate(-12 2241.8 1144.2)"/><ellipse cx="2242.4" cy="1144.0" rx="6.6" ry="8.2" fill="#a2a3b0" transform="rotate(-12 2241.8 1144.2)"/><ellipse cx="2242.1" cy="1144.4" rx="5.0" ry="6.6" fill="#14141c" transform="rotate(-12 2241.8 1144.2)"/>
</svg>
<div class="card" style="left:259px;width:646px"></div>
<div class="card" style="left:948px;width:646px"></div>
<div class="card" style="left:1637px;width:647px"></div>
<div class="a" style="left:259.00px;top:29.41px;font-size:45px;font-weight:bold;color:#fff;letter-spacing:-1.000px;-webkit-text-stroke:0.55px #17171f;">Our Services</div>
<div class="a" style="left:259.00px;top:938.16px;font-size:44.7px;font-weight:bold;color:#fff;letter-spacing:-0.258px;-webkit-text-stroke:0.55px #17171f;">Our Global Network</div>
<div class="a" style="left:259.00px;top:1014.14px;font-size:27px;font-weight:normal;color:#b9b9c6;letter-spacing:0.298px;">13 Datacenter locations around the world</div>
<div class="a" style="left:294.00px;top:1091.71px;font-size:24.2px;font-weight:bold;color:#fff;letter-spacing:-0.500px;-webkit-text-stroke:0.3px #17171f;">North America</div>
<div class="a" style="left:353.00px;top:1141.23px;font-size:24.3px;font-weight:normal;color:#b9b9c6;letter-spacing:-0.220px;">Atlanta, GA</div>
<div class="a" style="left:353.00px;top:1191.23px;font-size:24.3px;font-weight:normal;color:#b9b9c6;letter-spacing:0.127px;">New York, NY</div>
<div class="a" style="left:312.00px;top:329.53px;font-size:36px;font-weight:bold;color:#fff;letter-spacing:-0.500px;-webkit-text-stroke:0.45px #23232c;">Game Server Hosting</div>
<div class="a" style="left:312.00px;top:386.36px;font-size:23.2px;font-weight:normal;color:#b9b9c6;letter-spacing:0.778px;">Hosting your own game server shouldn't be hard.</div>
<div class="a" style="left:312.00px;top:424.56px;font-size:23.2px;font-weight:normal;color:#b9b9c6;letter-spacing:0.730px;">Choose from a variety of supported games and</div>
<div class="a" style="left:312.00px;top:461.76px;font-size:23.2px;font-weight:normal;color:#b9b9c6;letter-spacing:0.721px;">we'll get you up and running within minutes.</div>
<div class="a" style="left:346.00px;top:535.51px;font-size:24.2px;font-weight:normal;color:#b9b9c6;letter-spacing:0.189px;"><b>30+</b> Games Supported</div>
<div class="a" style="left:346.00px;top:575.51px;font-size:24.2px;font-weight:normal;color:#b9b9c6;letter-spacing:-0.238px;"><b>Automatic</b> Backups</div>
<div class="a" style="left:346.00px;top:616.11px;font-size:24.2px;font-weight:normal;color:#b9b9c6;letter-spacing:-0.325px;"><b>Workshop &amp; Mod</b> Installers</div>
<div class="a" style="left:312.00px;top:694.24px;font-size:23.7px;font-weight:bold;color:#0a90ff;letter-spacing:0.181px;-webkit-text-stroke:0.3px #23232c;">View Pricing</div>
<div class="a" style="left:1001.00px;top:329.53px;font-size:36px;font-weight:bold;color:#fff;letter-spacing:-0.562px;-webkit-text-stroke:0.45px #23232c;">Ryzen VPS Hosting</div>
<div class="a" style="left:1001.00px;top:386.36px;font-size:23.2px;font-weight:normal;color:#b9b9c6;letter-spacing:0.540px;">Built on Ryzen processors and NVMe SSDs, our</div>
<div class="a" style="left:1001.00px;top:424.56px;font-size:23.2px;font-weight:normal;color:#b9b9c6;letter-spacing:0.702px;">unique VPS platform is built for those needing</div>
<div class="a" style="left:1001.00px;top:461.76px;font-size:23.2px;font-weight:normal;color:#b9b9c6;letter-spacing:0.756px;">serious processing power from their instances.</div>
<div class="a" style="left:1035.00px;top:535.51px;font-size:24.2px;font-weight:normal;color:#b9b9c6;letter-spacing:-0.070px;"><b>AMD Ryzen</b> Hypervisors</div>
<div class="a" style="left:1035.00px;top:575.51px;font-size:24.2px;font-weight:normal;color:#b9b9c6;letter-spacing:-0.780px;"><b>1-6</b> vCPU(s)</div>
<div class="a" style="left:1035.00px;top:616.11px;font-size:24.2px;font-weight:normal;color:#b9b9c6;letter-spacing:0.211px;"><b>Unmetered</b> Bandwidth</div>
<div class="a" style="left:1001.00px;top:694.24px;font-size:23.7px;font-weight:bold;color:#0a90ff;letter-spacing:0.181px;-webkit-text-stroke:0.3px #23232c;">View Pricing</div>
<div class="a" style="left:1690.00px;top:329.53px;font-size:36px;font-weight:bold;color:#fff;letter-spacing:-0.349px;-webkit-text-stroke:0.45px #23232c;">Dedicated Servers</div>
<div class="a" style="left:1690.00px;top:386.36px;font-size:23.2px;font-weight:normal;color:#b9b9c6;letter-spacing:0.756px;">Need that dedicated, raw performance? We offer</div>
<div class="a" style="left:1690.00px;top:424.56px;font-size:23.2px;font-weight:normal;color:#b9b9c6;letter-spacing:0.828px;">both unmanaged and managed hosting solutions</div>
<div class="a" style="left:1690.00px;top:461.76px;font-size:23.2px;font-weight:normal;color:#b9b9c6;letter-spacing:0.780px;">for your most resource-demanding projects.</div>
<div class="a" style="left:1724.00px;top:535.51px;font-size:24.2px;font-weight:normal;color:#b9b9c6;letter-spacing:-0.168px;"><b>AMD Ryzen</b> Processors</div>
<div class="a" style="left:1724.00px;top:575.51px;font-size:24.2px;font-weight:normal;color:#b9b9c6;letter-spacing:0.107px;"><b>NVMe SSD</b> Storage</div>
<div class="a" style="left:1724.00px;top:616.11px;font-size:24.2px;font-weight:normal;color:#b9b9c6;letter-spacing:0.222px;"><b>Unmetered</b> Bandwidth</div>
<div class="a" style="left:1690.00px;top:694.24px;font-size:23.7px;font-weight:bold;color:#0a90ff;letter-spacing:0.181px;-webkit-text-stroke:0.3px #23232c;">View Pricing</div>

<svg width="2560" height="1229" viewBox="0 0 2560 1229" style="position:absolute;left:0;top:0">
<path d="M339.2,248.5 C337,248.8 333.5,249 331.5,247.2 C329.8,245.6 329.6,243 328.9,241.4 C327.6,240.2 326,240.8 324.8,241.8 L322.3,244.3 C320.3,246.5 320.2,250.2 322.4,252.4 C323.8,253.8 326.2,254.1 327.6,255.3 C329.4,256.9 329.3,259.6 327.7,261.2 L321.9,266.8 C320.6,267.4 318.8,267.5 317.6,268.7 A7.3,7.3 0 1 0 328.5,279.4 C329.6,278.2 329.7,276.4 330.3,275 L336.1,269.3 C337.7,267.7 340.5,267.7 342.1,269.4 C343.3,270.8 343.5,273 345.1,274.4 C347.2,276.3 350.3,276.2 352.3,274.3 L355.2,271.5 C356.5,270.3 357,268.4 355.9,267.2 C354.4,266.2 352.2,266.5 350.6,265.1 C348.4,263.3 347.8,260.4 347.9,258.3" fill="none" stroke="#ffffff" stroke-width="3.3" stroke-linejoin="round" stroke-linecap="round"/>
<path d="M339.4,248.2 L347.9,258.3 M339.6,248.0 C348,237.5 357,227.5 366,220.5 C372.5,215.5 379.5,212.5 385.8,211.2 C385.2,218.5 381.5,227.5 373,235.8 C365.5,243.2 356,250.8 347.9,258.3" fill="none" stroke="#ffffff" stroke-width="3.3" stroke-linejoin="miter" stroke-linecap="round"/>
<path d="M334.4,236.8 C338.5,233 341.8,225 336.4,219.2 C343,220 351,219.5 358.3,209.6 C364,208.6 370.5,207 376,204.6" fill="none" stroke="#0f93f5" stroke-width="3.4" stroke-linejoin="miter" stroke-miterlimit="4" stroke-linecap="butt"/>
<path d="M392.2,221.2 C389.5,226.5 387.6,232.2 387.3,238.9 C381.5,240.5 376.3,244.5 375.2,251.8 L377.8,260.8 C371.8,258 364.8,258.8 359.8,263.2" fill="none" stroke="#0f93f5" stroke-width="3.4" stroke-linejoin="miter" stroke-linecap="butt"/>
<rect x="1691.8" y="202.2" width="76.5" height="17.1" rx="7.2" fill="none" stroke="#ffffff" stroke-width="3.3"/><circle cx="1702.4" cy="211.2" r="3.3" fill="#0f93f5"/><circle cx="1711.7" cy="211.2" r="3.3" fill="#0f93f5"/><circle cx="1720.7" cy="211.2" r="3.3" fill="#0f93f5"/><line x1="1730.3" y1="211.2" x2="1759.2" y2="211.2" stroke="#0f93f5" stroke-width="3.3" stroke-linecap="round"/><rect x="1691.8" y="225.0" width="76.5" height="16.7" rx="7.2" fill="none" stroke="#ffffff" stroke-width="3.3"/><circle cx="1702.4" cy="233.8" r="3.3" fill="#0f93f5"/><circle cx="1711.7" cy="233.8" r="3.3" fill="#0f93f5"/><circle cx="1720.7" cy="233.8" r="3.3" fill="#0f93f5"/><line x1="1730.3" y1="233.8" x2="1759.2" y2="233.8" stroke="#0f93f5" stroke-width="3.3" stroke-linecap="round"/><rect x="1691.8" y="247.7" width="76.5" height="16.8" rx="7.2" fill="none" stroke="#ffffff" stroke-width="3.3"/><circle cx="1702.4" cy="256.5" r="3.3" fill="#0f93f5"/><circle cx="1711.7" cy="256.5" r="3.3" fill="#0f93f5"/><circle cx="1720.7" cy="256.5" r="3.3" fill="#0f93f5"/><line x1="1730.3" y1="256.5" x2="1759.2" y2="256.5" stroke="#0f93f5" stroke-width="3.3" stroke-linecap="round"/><line x1="1730.0" y1="268" x2="1730.0" y2="273.5" stroke="#ffffff" stroke-width="3.2" stroke-linecap="round"/><circle cx="1730.0" cy="278.3" r="4.5" fill="none" stroke="#ffffff" stroke-width="3.2"/><line x1="1702.3" y1="278.3" x2="1725.5" y2="278.3" stroke="#ffffff" stroke-width="3.2" stroke-linecap="round"/><line x1="1734.5" y1="278.3" x2="1757.7" y2="278.3" stroke="#ffffff" stroke-width="3.2" stroke-linecap="round"/>
<rect x="1002.8" y="202.2" width="76.5" height="17.1" rx="7.2" fill="none" stroke="#ffffff" stroke-width="3.3"/><circle cx="1013.4" cy="211.2" r="3.3" fill="#0f93f5"/><circle cx="1022.7" cy="211.2" r="3.3" fill="#0f93f5"/><circle cx="1031.7" cy="211.2" r="3.3" fill="#0f93f5"/><line x1="1041.3" y1="211.2" x2="1070.2" y2="211.2" stroke="#0f93f5" stroke-width="3.3" stroke-linecap="round"/><circle cx="1013.4" cy="233.8" r="3.3" fill="#0f93f5"/><circle cx="1022.7" cy="233.8" r="3.3" fill="#0f93f5"/><circle cx="1031.7" cy="233.8" r="3.3" fill="#0f93f5"/><circle cx="1013.4" cy="256.5" r="3.3" fill="#0f93f5"/><circle cx="1022.7" cy="256.5" r="3.3" fill="#0f93f5"/><path d="M1033.0,241.7 L1010.0,241.7 A7.2,7.2 0 0 1 1002.8,234.5 L1002.8,232.2 A7.2,7.2 0 0 1 1010.0,225.0 L1072.1,225.0 A7.2,7.2 0 0 1 1079.3,232.2 L1079.3,238.5" fill="none" stroke="#ffffff" stroke-width="3.3" stroke-linecap="round"/><path d="M1027.0,247.7 L1010.0,247.7 A7.2,7.2 0 0 0 1002.8,254.9 L1002.8,257.3 A7.2,7.2 0 0 0 1010.0,264.5 L1029.5,264.5" fill="none" stroke="#ffffff" stroke-width="3.3" stroke-linecap="round"/><path d="M1040.0,264.3 L1065.5,264.3 A13,13 0 1 0 1061.2,240.5 A10.1,10.1 0 1 0 1041.8,244.5 A10.2,10.2 0 1 0 1040.0,264.3 Z" fill="none" stroke="#ffffff" stroke-width="3.3" stroke-linejoin="round"/><line x1="1041.0" y1="268" x2="1041.0" y2="273.5" stroke="#ffffff" stroke-width="3.2" stroke-linecap="round"/><circle cx="1041.0" cy="278.3" r="4.5" fill="none" stroke="#ffffff" stroke-width="3.2"/><line x1="1013.3" y1="278.3" x2="1036.5" y2="278.3" stroke="#ffffff" stroke-width="3.2" stroke-linecap="round"/><line x1="1045.5" y1="278.3" x2="1068.7" y2="278.3" stroke="#ffffff" stroke-width="3.2" stroke-linecap="round"/>
<path d="M312.9,547.4000000000001 L320.2,554.3000000000001 L332.9,541.3000000000001" fill="none" stroke="#52df3c" stroke-width="3.6" stroke-linecap="butt" stroke-linejoin="miter"/>
<path d="M312.9,587.6 L320.2,594.5 L332.9,581.5" fill="none" stroke="#52df3c" stroke-width="3.6" stroke-linecap="butt" stroke-linejoin="miter"/>
<path d="M312.9,628.0 L320.2,634.9 L332.9,621.9" fill="none" stroke="#52df3c" stroke-width="3.6" stroke-linecap="butt" stroke-linejoin="miter"/>
<path d="M467.3,704.6 L489.6,704.6 M482.6,697.6 L489.6,704.6 L482.6,711.6" fill="none" stroke="#0a90ff" stroke-width="3.2" stroke-linecap="round" stroke-linejoin="round"/>
<path d="M1001.9,547.4000000000001 L1009.2,554.3000000000001 L1021.9,541.3000000000001" fill="none" stroke="#52df3c" stroke-width="3.6" stroke-linecap="butt" stroke-linejoin="miter"/>
<path d="M1001.9,587.6 L1009.2,594.5 L1021.9,581.5" fill="none" stroke="#52df3c" stroke-width="3.6" stroke-linecap="butt" stroke-linejoin="miter"/>
<path d="M1001.9,628.0 L1009.2,634.9 L1021.9,621.9" fill="none" stroke="#52df3c" stroke-width="3.6" stroke-linecap="butt" stroke-linejoin="miter"/>
<path d="M1156.3,704.6 L1178.6,704.6 M1171.6,697.6 L1178.6,704.6 L1171.6,711.6" fill="none" stroke="#0a90ff" stroke-width="3.2" stroke-linecap="round" stroke-linejoin="round"/>
<path d="M1690.9,547.4000000000001 L1698.2,554.3000000000001 L1710.9,541.3000000000001" fill="none" stroke="#52df3c" stroke-width="3.6" stroke-linecap="butt" stroke-linejoin="miter"/>
<path d="M1690.9,587.6 L1698.2,594.5 L1710.9,581.5" fill="none" stroke="#52df3c" stroke-width="3.6" stroke-linecap="butt" stroke-linejoin="miter"/>
<path d="M1690.9,628.0 L1698.2,634.9 L1710.9,621.9" fill="none" stroke="#52df3c" stroke-width="3.6" stroke-linecap="butt" stroke-linejoin="miter"/>
<path d="M1845.3,704.6 L1867.6,704.6 M1860.6,697.6 L1867.6,704.6 L1860.6,711.6" fill="none" stroke="#0a90ff" stroke-width="3.2" stroke-linecap="round" stroke-linejoin="round"/>
<path d="M259.5,1101.7 L266.8,1108.6 L274.1,1101.7" fill="none" stroke="#ffffff" stroke-width="3" stroke-linecap="round" stroke-linejoin="round"/>
<line x1="266.5" y1="1122" x2="266.5" y2="1229" stroke="#55555f" stroke-width="1.2" stroke-dasharray="4,4"/>
<clipPath id="fc1140"><rect x="299.7" y="1140.9" width="35.4" height="23" rx="2.5"/></clipPath><g clip-path="url(#fc1140)"><rect x="299.7" y="1140.9" width="35.4" height="23" fill="#f2f2f4"/><rect x="299.7" y="1140.90" width="35.4" height="1.77" fill="#ee4455"/><rect x="299.7" y="1144.44" width="35.4" height="1.77" fill="#ee4455"/><rect x="299.7" y="1147.98" width="35.4" height="1.77" fill="#ee4455"/><rect x="299.7" y="1151.52" width="35.4" height="1.77" fill="#ee4455"/><rect x="299.7" y="1155.05" width="35.4" height="1.77" fill="#ee4455"/><rect x="299.7" y="1158.59" width="35.4" height="1.77" fill="#ee4455"/><rect x="299.7" y="1162.13" width="35.4" height="1.77" fill="#ee4455"/><rect x="299.7" y="1140.9" width="16.4" height="12.38" fill="#5564b8"/><circle cx="301.20" cy="1142.30" r="0.55" fill="#e8e8f5"/><circle cx="303.90" cy="1142.30" r="0.55" fill="#e8e8f5"/><circle cx="306.60" cy="1142.30" r="0.55" fill="#e8e8f5"/><circle cx="309.30" cy="1142.30" r="0.55" fill="#e8e8f5"/><circle cx="312.00" cy="1142.30" r="0.55" fill="#e8e8f5"/><circle cx="314.70" cy="1142.30" r="0.55" fill="#e8e8f5"/><circle cx="301.20" cy="1144.70" r="0.55" fill="#e8e8f5"/><circle cx="303.90" cy="1144.70" r="0.55" fill="#e8e8f5"/><circle cx="306.60" cy="1144.70" r="0.55" fill="#e8e8f5"/><circle cx="309.30" cy="1144.70" r="0.55" fill="#e8e8f5"/><circle cx="312.00" cy="1144.70" r="0.55" fill="#e8e8f5"/><circle cx="314.70" cy="1144.70" r="0.55" fill="#e8e8f5"/><circle cx="301.20" cy="1147.10" r="0.55" fill="#e8e8f5"/><circle cx="303.90" cy="1147.10" r="0.55" fill="#e8e8f5"/><circle cx="306.60" cy="1147.10" r="0.55" fill="#e8e8f5"/><circle cx="309.30" cy="1147.10" r="0.55" fill="#e8e8f5"/><circle cx="312.00" cy="1147.10" r="0.55" fill="#e8e8f5"/><circle cx="314.70" cy="1147.10" r="0.55" fill="#e8e8f5"/><circle cx="301.20" cy="1149.50" r="0.55" fill="#e8e8f5"/><circle cx="303.90" cy="1149.50" r="0.55" fill="#e8e8f5"/><circle cx="306.60" cy="1149.50" r="0.55" fill="#e8e8f5"/><circle cx="309.30" cy="1149.50" r="0.55" fill="#e8e8f5"/><circle cx="312.00" cy="1149.50" r="0.55" fill="#e8e8f5"/><circle cx="314.70" cy="1149.50" r="0.55" fill="#e8e8f5"/><circle cx="301.20" cy="1151.90" r="0.55" fill="#e8e8f5"/><circle cx="303.90" cy="1151.90" r="0.55" fill="#e8e8f5"/><circle cx="306.60" cy="1151.90" r="0.55" fill="#e8e8f5"/><circle cx="309.30" cy="1151.90" r="0.55" fill="#e8e8f5"/><circle cx="312.00" cy="1151.90" r="0.55" fill="#e8e8f5"/><circle cx="314.70" cy="1151.90" r="0.55" fill="#e8e8f5"/></g>
<clipPath id="fc1191"><rect x="299.7" y="1191" width="35.4" height="23" rx="2.5"/></clipPath><g clip-path="url(#fc1191)"><rect x="299.7" y="1191" width="35.4" height="23" fill="#f2f2f4"/><rect x="299.7" y="1191.00" width="35.4" height="1.77" fill="#ee4455"/><rect x="299.7" y="1194.54" width="35.4" height="1.77" fill="#ee4455"/><rect x="299.7" y="1198.08" width="35.4" height="1.77" fill="#ee4455"/><rect x="299.7" y="1201.62" width="35.4" height="1.77" fill="#ee4455"/><rect x="299.7" y="1205.15" width="35.4" height="1.77" fill="#ee4455"/><rect x="299.7" y="1208.69" width="35.4" height="1.77" fill="#ee4455"/><rect x="299.7" y="1212.23" width="35.4" height="1.77" fill="#ee4455"/><rect x="299.7" y="1191" width="16.4" height="12.38" fill="#5564b8"/><circle cx="301.20" cy="1192.40" r="0.55" fill="#e8e8f5"/><circle cx="303.90" cy="1192.40" r="0.55" fill="#e8e8f5"/><circle cx="306.60" cy="1192.40" r="0.55" fill="#e8e8f5"/><circle cx="309.30" cy="1192.40" r="0.55" fill="#e8e8f5"/><circle cx="312.00" cy="1192.40" r="0.55" fill="#e8e8f5"/><circle cx="314.70" cy="1192.40" r="0.55" fill="#e8e8f5"/><circle cx="301.20" cy="1194.80" r="0.55" fill="#e8e8f5"/><circle cx="303.90" cy="1194.80" r="0.55" fill="#e8e8f5"/><circle cx="306.60" cy="1194.80" r="0.55" fill="#e8e8f5"/><circle cx="309.30" cy="1194.80" r="0.55" fill="#e8e8f5"/><circle cx="312.00" cy="1194.80" r="0.55" fill="#e8e8f5"/><circle cx="314.70" cy="1194.80" r="0.55" fill="#e8e8f5"/><circle cx="301.20" cy="1197.20" r="0.55" fill="#e8e8f5"/><circle cx="303.90" cy="1197.20" r="0.55" fill="#e8e8f5"/><circle cx="306.60" cy="1197.20" r="0.55" fill="#e8e8f5"/><circle cx="309.30" cy="1197.20" r="0.55" fill="#e8e8f5"/><circle cx="312.00" cy="1197.20" r="0.55" fill="#e8e8f5"/><circle cx="314.70" cy="1197.20" r="0.55" fill="#e8e8f5"/><circle cx="301.20" cy="1199.60" r="0.55" fill="#e8e8f5"/><circle cx="303.90" cy="1199.60" r="0.55" fill="#e8e8f5"/><circle cx="306.60" cy="1199.60" r="0.55" fill="#e8e8f5"/><circle cx="309.30" cy="1199.60" r="0.55" fill="#e8e8f5"/><circle cx="312.00" cy="1199.60" r="0.55" fill="#e8e8f5"/><circle cx="314.70" cy="1199.60" r="0.55" fill="#e8e8f5"/><circle cx="301.20" cy="1202.00" r="0.55" fill="#e8e8f5"/><circle cx="303.90" cy="1202.00" r="0.55" fill="#e8e8f5"/><circle cx="306.60" cy="1202.00" r="0.55" fill="#e8e8f5"/><circle cx="309.30" cy="1202.00" r="0.55" fill="#e8e8f5"/><circle cx="312.00" cy="1202.00" r="0.55" fill="#e8e8f5"/><circle cx="314.70" cy="1202.00" r="0.55" fill="#e8e8f5"/></g>
<rect x="2546" y="4" width="10.4" height="1221" rx="5.2" fill="#121219"/>
<defs><linearGradient id="sb" x1="0" y1="0" x2="0" y2="1"><stop offset="0" stop-color="#1b8fe9"/><stop offset="1" stop-color="#3fcbff"/></linearGradient></defs>
<rect x="2546" y="225.6" width="10.2" height="198.6" rx="5.1" fill="url(#sb)"/>
</svg>
</body></html>
